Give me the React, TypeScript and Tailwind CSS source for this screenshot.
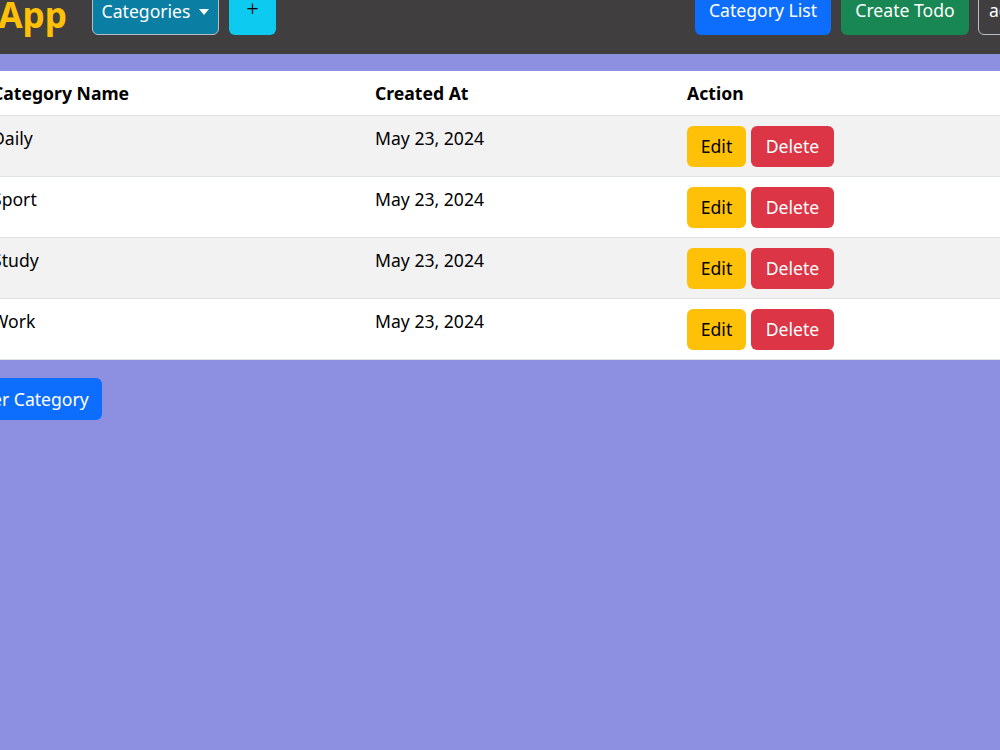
import React from "react";

const categories = [
  { name: "Daily", createdAt: "May 23, 2024" },
  { name: "Sport", createdAt: "May 23, 2024" },
  { name: "Study", createdAt: "May 23, 2024" },
  { name: "Work", createdAt: "May 23, 2024" },
];

export default function App() {
  return (
    <div className="w-[1000px] h-[750px] overflow-hidden bg-[#8d8fe0] font-['Noto_Sans',sans-serif] text-[17.6px] leading-[26.4px] text-[#212529]">
      {/* page shown scrolled to the right and down */}
      <div className="-ml-[95px] w-[1250px]">
        {/* Navbar */}
        <nav className="h-[54px] bg-[#403e3e] flex items-end pb-[19px]">
          <div className="w-[187px] h-[42px] flex items-center">
            <span className="text-[35.2px] leading-[42px] font-bold text-[#ffc107]">Todo App</span>
          </div>
          <button className="h-[42px] w-[127px] pb-[6px] rounded-md bg-[#0b7ea4] border border-[#b8bec4] text-white flex items-center justify-center gap-[9px]">
            Categories
            <span className="w-0 h-0 border-l-[5px] border-r-[5px] border-t-[6px] border-l-transparent border-r-transparent border-t-white mt-[1px]" />
          </button>
          <button className="ml-[10px] h-[42px] w-[47px] rounded-md bg-[#0dcaf0] text-black text-[22px] leading-none font-light flex items-center justify-center pb-[12px]">
            +
          </button>
          <div className="w-[419px]" />
          <button className="h-[42px] w-[136px] pb-[8px] rounded-md bg-[#0d6efd] text-white">Category List</button>
          <button className="ml-[10px] h-[42px] w-[128px] pb-[8px] rounded-md bg-[#198754] text-white">Create Todo</button>
          <button className="ml-[9px] h-[42px] pl-[10px] pr-[13px] pb-[8px] rounded-md border border-[#b8bec4] text-white">admin</button>
        </nav>

        <div className="pt-[17px]">
          {/* Table */}
          <div className="ml-[78px] bg-white w-[1150px]">
            <div className="grid grid-cols-[383px_312px_1fr] h-[45px] items-center border-b border-[#dee2e6] font-bold text-black">
              <div className="px-[9px]">Category Name</div>
              <div className="px-[9px]">Created At</div>
              <div className="px-[9px]">Action</div>
            </div>
            {categories.map((c, i) => (
              <div
                key={c.name}
                className={
                  "grid grid-cols-[383px_312px_1fr] h-[61px] border-b border-[#dee2e6] text-black " +
                  (i % 2 === 0 ? "bg-[#f2f2f2]" : "bg-white")
                }
              >
                <div className="px-[9px] pt-[9px]">{c.name}</div>
                <div className="px-[9px] pt-[9px]">{c.createdAt}</div>
                <div className="px-[9px] pt-[10px] flex gap-[5px] items-start">
                  <button className="h-[41px] w-[59px] rounded-md bg-[#ffc107] text-black">Edit</button>
                  <button className="h-[41px] w-[83px] rounded-md bg-[#dc3545] text-white">Delete</button>
                </div>
              </div>
            ))}
          </div>

          <button className="mt-[18px] ml-[23px] h-[42px] px-[13px] rounded-md bg-[#0d6efd] text-white">
            Register Category
          </button>
        </div>
      </div>
    </div>
  );
}
